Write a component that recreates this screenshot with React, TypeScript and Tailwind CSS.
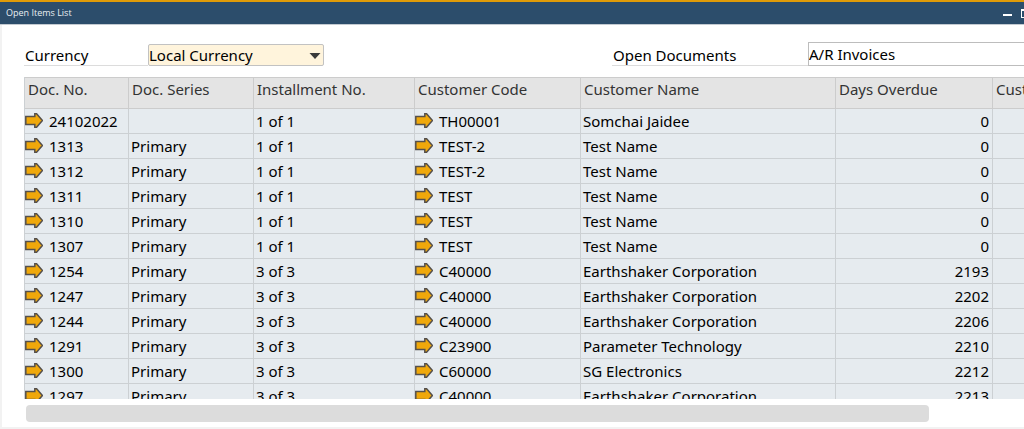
import React from "react";

type Item = {
  doc: string;
  series: string;
  installment: string;
  code: string;
  name: string;
  overdue: number;
};

const items: Item[] = [
  { doc: "24102022", series: "", installment: "1 of 1", code: "TH00001", name: "Somchai Jaidee", overdue: 0 },
  { doc: "1313", series: "Primary", installment: "1 of 1", code: "TEST-2", name: "Test Name", overdue: 0 },
  { doc: "1312", series: "Primary", installment: "1 of 1", code: "TEST-2", name: "Test Name", overdue: 0 },
  { doc: "1311", series: "Primary", installment: "1 of 1", code: "TEST", name: "Test Name", overdue: 0 },
  { doc: "1310", series: "Primary", installment: "1 of 1", code: "TEST", name: "Test Name", overdue: 0 },
  { doc: "1307", series: "Primary", installment: "1 of 1", code: "TEST", name: "Test Name", overdue: 0 },
  { doc: "1254", series: "Primary", installment: "3 of 3", code: "C40000", name: "Earthshaker Corporation", overdue: 2193 },
  { doc: "1247", series: "Primary", installment: "3 of 3", code: "C40000", name: "Earthshaker Corporation", overdue: 2202 },
  { doc: "1244", series: "Primary", installment: "3 of 3", code: "C40000", name: "Earthshaker Corporation", overdue: 2206 },
  { doc: "1291", series: "Primary", installment: "3 of 3", code: "C23900", name: "Parameter Technology", overdue: 2210 },
  { doc: "1300", series: "Primary", installment: "3 of 3", code: "C60000", name: "SG Electronics", overdue: 2212 },
  { doc: "1297", series: "Primary", installment: "3 of 3", code: "C40000", name: "Earthshaker Corporation", overdue: 2213 },
];

const headers = [
  "Doc. No.",
  "Doc. Series",
  "Installment No.",
  "Customer Code",
  "Customer Name",
  "Days Overdue",
  "Customer Ref. No.",
];

function LinkArrow() {
  return (
    <svg viewBox="0 0 18 16" className="h-4 w-[18px] shrink-0" aria-hidden="true">
      <path
        d="M0.8 4.5H9.8V1.8H11.6L17.4 8.5L11.6 15.2H9.8V12.5H0.8Z"
        fill="#f0a80a"
        stroke="#55504c"
        strokeWidth="1.5"
        strokeLinejoin="miter"
      />
    </svg>
  );
}

function LinkedValue({ value }: { value: string }) {
  return (
    <div className="flex h-6 items-center gap-1.5">
      <a href="#" aria-label={`Open ${value}`} className="-mt-0.5 block shrink-0">
        <LinkArrow />
      </a>
      <span>{value}</span>
    </div>
  );
}

const cell = "h-[25px] border-b border-r border-[#ccd0d3] p-0 pl-0.5 leading-6";
const linkCell = "h-[25px] border-b border-r border-[#ccd0d3] p-0 leading-6";

export default function App() {
  return (
    <div className="flex h-screen flex-col overflow-hidden border-t-2 border-[#e09b08] bg-[#f2f2f2] font-['Noto_Sans',sans-serif] text-[15px] text-black">
      <header className="flex h-[23px] shrink-0 items-center justify-between overflow-hidden border-b border-[#c3cad1] bg-[#2c4d6b] pl-1.5">
        <h1 className="font-['Open_Sans',sans-serif] text-[9px] leading-4 text-[#e8edf2]">Open Items List</h1>
        <div className="flex h-full items-center gap-2">
          <button type="button" aria-label="Minimize" className="flex h-4 w-[10px] items-center pt-1">
            <span className="h-0.5 w-[9px] bg-white" />
          </button>
          <button type="button" aria-label="Maximize" className="flex h-4 w-[3px] items-center">
            <span className="h-[9px] w-[10px] shrink-0 border border-t-2 border-white" />
          </button>
        </div>
      </header>

      <main className="mb-0.5 ml-0.5 flex min-h-0 flex-1 flex-col bg-white pl-[22px] pt-[17px]">
        <form className="flex h-6 shrink-0 items-end">
          <label htmlFor="currency" className="h-[22px] w-[124px] shrink-0 border-b border-[#dcdcdc] pl-px leading-[22px]">
            Currency
          </label>
          <div className="relative w-44 shrink-0">
            <select
              id="currency"
              className="block h-[22px] w-full appearance-none rounded-xs border border-[#c2c2c2] bg-[#fff4dc] p-0 leading-5 outline-none"
            >
              <option>Local Currency</option>
            </select>
            <svg viewBox="0 0 12 6" className="pointer-events-none absolute right-[3px] top-[9px] h-1.5 w-3" aria-hidden="true">
              <path d="M0.5 0H11.5L6 6Z" fill="#3a3a3a" />
            </svg>
          </div>
          <div className="flex-1" />
          <label htmlFor="documents" className="h-[22px] w-[196px] shrink-0 border-b border-[#dcdcdc] pl-px leading-[22px]">
            Open Documents
          </label>
          <div className="w-[216px] shrink-0">
            <select
              id="documents"
              className="block h-6 w-full appearance-none border border-r-0 border-[#bdbdbd] bg-white p-0 leading-5 outline-none"
            >
              <option>A/R Invoices</option>
            </select>
          </div>
        </form>

        <div className="mt-[11px] min-h-0 flex-1 overflow-hidden">
          <table className="w-full table-fixed border-separate border-spacing-0 border-l border-[#ccd0d3] bg-[#e6ebef]">
            <colgroup>
              <col className="w-[104px]" />
              <col className="w-[125px]" />
              <col className="w-[161px]" />
              <col className="w-[166px]" />
              <col />
              <col className="w-[157px]" />
              <col className="w-[31px]" />
            </colgroup>
            <thead>
              <tr>
                {headers.map((title) => (
                  <th
                    key={title}
                    className="h-8 overflow-hidden whitespace-nowrap border-b border-r border-t border-[#cccccc] bg-[#e4e4e4] p-0 pl-[3px] text-left align-top font-normal leading-[22px] text-[#333333] last:border-r-0"
                  >
                    {title}
                  </th>
                ))}
              </tr>
            </thead>
            <tbody>
              {items.map((item) => (
                <tr key={item.doc}>
                  <td className={linkCell}>
                    <LinkedValue value={item.doc} />
                  </td>
                  <td className={cell}>{item.series}</td>
                  <td className={cell}>{item.installment}</td>
                  <td className={linkCell}>
                    <LinkedValue value={item.code} />
                  </td>
                  <td className={cell}>{item.name}</td>
                  <td className="h-[25px] border-b border-r border-[#ccd0d3] p-0 pr-[3px] text-right leading-6">
                    {item.overdue}
                  </td>
                  <td className="border-b border-[#ccd0d3] p-0" />
                </tr>
              ))}
            </tbody>
          </table>
        </div>

        <div className="shrink-0 pb-[5px] pl-0.5 pt-1.5">
          <div className="h-[17px] w-[90.5%] rounded bg-[#dcdcdc]" />
        </div>
      </main>
    </div>
  );
}
